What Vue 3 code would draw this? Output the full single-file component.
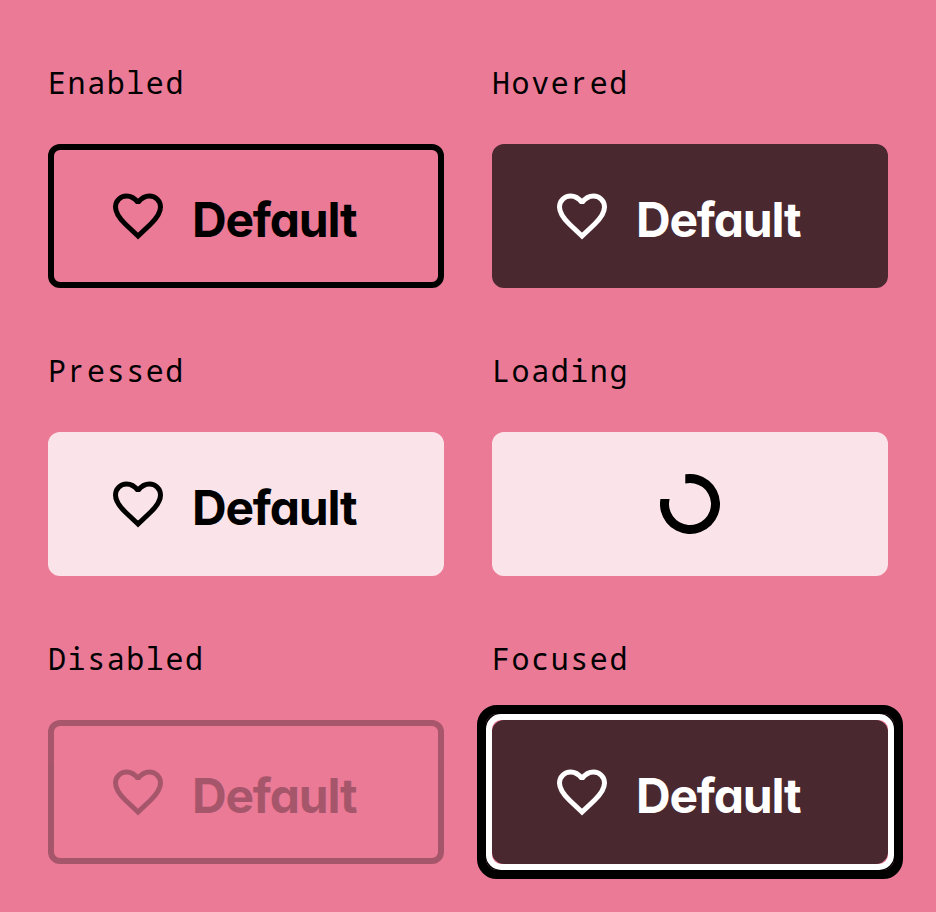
<script setup>
const states = [
  { label: 'Enabled', kind: 'enabled' },
  { label: 'Hovered', kind: 'hovered' },
  { label: 'Pressed', kind: 'pressed' },
  { label: 'Loading', kind: 'loading' },
  { label: 'Disabled', kind: 'disabled' },
  { label: 'Focused', kind: 'hovered focused' },
]
</script>

<template>
  <main class="board">
    <section v-for="s in states" :key="s.label" class="state">
      <h2 class="label"><span v-for="(c, i) in s.label" :key="i" :class="{ plain: c === 'r' }">{{ c }}</span></h2>
      <button type="button" class="btn" :class="s.kind" :disabled="s.kind === 'disabled'">
        <svg v-if="s.kind === 'loading'" class="spinner" viewBox="0 0 60 60">
          <path d="M25.3 .37A30 30 0 1 1 .42 25H9.6A21 21 0 1 0 25.3 9.53Z" />
        </svg>
        <template v-else>
          <svg class="heart" viewBox="0 0 72 72">
            <path d="M36 56L23.5 44.2C17.5 38.5 13.5 33.5 13.5 27C13.5 20.8 18.4 16 24.6 16C29.5 16 33 18.6 36 22.5C39 18.6 42.5 16 47.4 16C53.6 16 58.5 20.8 58.5 27C58.5 33.5 54.5 38.5 48.5 44.2Z" />
          </svg>
          <span class="text">Default</span>
        </template>
      </button>
    </section>
  </main>
</template>

<style>
body {
  background: #eb7a97;
}
</style>

<style scoped>
.board {
  box-sizing: border-box;
  width: 936px;
  height: 912px;
  padding: 48px;
  display: grid;
  grid-template-columns: 396px 396px;
  grid-auto-rows: 240px;
  gap: 48px;
  background: #eb7a97;
}
.state {
  display: flex;
  flex-direction: column;
  justify-content: space-between;
}
.label {
  margin: 0;
  height: 72px;
  line-height: 70px;
  font-family: "Droid Sans Mono", "Noto Mono", "Noto Sans Mono", "DejaVu Sans Mono", monospace;
  font-size: 30px;
  font-weight: 400;
  letter-spacing: 1.55px;
  color: #000;
}
.plain {
  display: inline-block;
  width: 19.5px;
  text-indent: 2px;
  font-family: "Noto Sans", sans-serif;
  line-height: 30px;
}
.btn {
  box-sizing: border-box;
  position: relative;
  width: 396px;
  height: 144px;
  margin: 0;
  padding: 0 0 0 48px;
  border: 6px solid #000;
  border-radius: 12px;
  background: transparent;
  color: #000;
  display: flex;
  align-items: center;
}
.hovered {
  background: #4a282f;
  border-color: #4a282f;
  color: #fff;
}
.pressed,
.loading {
  background: #fbe4e9;
  border-color: #fbe4e9;
}
.loading {
  padding: 0;
  justify-content: center;
}
.disabled {
  opacity: 0.29;
}
.focused::before,
.focused::after {
  content: "";
  position: absolute;
}
.focused::before {
  inset: -21px;
  border: 9px solid #000;
  border-radius: 20px;
  box-shadow: inset 0 0 0 3px #000;
}
.focused::after {
  inset: -12px;
  border: 6px solid #fff;
  border-radius: 15px;
}
.heart {
  flex: none;
  width: 72px;
  height: 72px;
  fill: none;
  stroke: currentColor;
  stroke-width: 5;
  stroke-miterlimit: 1.5;
}
.text {
  margin-left: 18px;
  padding-top: 7px;
  font-family: Inter, sans-serif;
  font-feature-settings: "cv11";
  font-size: 48px;
  line-height: 72px;
  font-weight: 650;
  letter-spacing: -1.2px;
}
.spinner {
  width: 60px;
  height: 60px;
  fill: #000;
}
</style>
